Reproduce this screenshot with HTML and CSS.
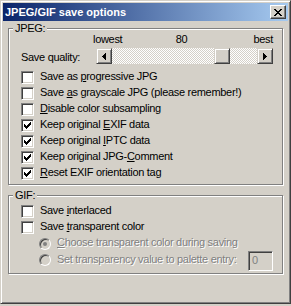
FILE: index.html
```html
<!DOCTYPE html>
<html lang="en">
<head>
    <meta charset="UTF-8">
    <title>JPEG/GIF save options</title>
    <link rel="stylesheet" href="styles.css">
</head>
<body>

    <div class="window">
        <div class="titlebar">
            <span class="title">JPEG/GIF save options</span>
            <span class="close-btn">
                <svg width="8" height="7" viewBox="0 0 8 7" shape-rendering="crispEdges"><path d="M0 0h2v1H0z M6 0h2v1H6z M1 1h2v1H1z M5 1h2v1H5z M2 2h4v1H2z M3 3h2v1H3z M2 4h4v1H2z M1 5h2v1H1z M5 5h2v1H5z M0 6h2v1H0z M6 6h2v1H6z" fill="#000"/></svg>
            </span>
        </div>

        <div class="content">
            <div class="group group-jpeg">
                <span class="group-label">JPEG:</span>

                <div class="scale-labels">
                    <span>lowest</span>
                    <span>80</span>
                    <span class="best">best</span>
                </div>

                <div class="quality-row">
                    <span class="quality-label">Save quality:</span>
                    <div class="scrollbar">
                        <span class="arrow-btn">
                            <svg width="4" height="7" viewBox="0 0 4 7" shape-rendering="crispEdges"><path d="M0 3h1v1H0z M1 2h1v3H1z M2 1h1v5H2z M3 0h1v7H3z" fill="#000"/></svg>
                        </span>
                        <div class="track">
                            <span class="thumb"></span>
                        </div>
                        <span class="arrow-btn">
                            <svg width="4" height="7" viewBox="0 0 4 7" shape-rendering="crispEdges"><path d="M0 0h1v7H0z M1 1h1v5H1z M2 2h1v3H2z M3 3h1v1H3z" fill="#000"/></svg>
                        </span>
                    </div>
                </div>

                <div class="check-row">
                    <span class="checkbox"></span>
                    <span>Save as <u>p</u>rogressive JPG</span>
                </div>
                <div class="check-row">
                    <span class="checkbox"></span>
                    <span>Save <u>a</u>s grayscale JPG (please remember!)</span>
                </div>
                <div class="check-row">
                    <span class="checkbox"></span>
                    <span><u>D</u>isable color subsampling</span>
                </div>
                <div class="check-row">
                    <span class="checkbox"><svg width="7" height="7" viewBox="0 0 7 7" shape-rendering="crispEdges"><path d="M0 2h1v3H0z M1 3h1v3H1z M2 4h1v3H2z M3 3h1v3H3z M4 2h1v3H4z M5 1h1v3H5z M6 0h1v3H6z" fill="#000"/></svg></span>
                    <span>Keep original <u>E</u>XIF data</span>
                </div>
                <div class="check-row">
                    <span class="checkbox"><svg width="7" height="7" viewBox="0 0 7 7" shape-rendering="crispEdges"><path d="M0 2h1v3H0z M1 3h1v3H1z M2 4h1v3H2z M3 3h1v3H3z M4 2h1v3H4z M5 1h1v3H5z M6 0h1v3H6z" fill="#000"/></svg></span>
                    <span>Keep original <u>I</u>PTC data</span>
                </div>
                <div class="check-row">
                    <span class="checkbox"><svg width="7" height="7" viewBox="0 0 7 7" shape-rendering="crispEdges"><path d="M0 2h1v3H0z M1 3h1v3H1z M2 4h1v3H2z M3 3h1v3H3z M4 2h1v3H4z M5 1h1v3H5z M6 0h1v3H6z" fill="#000"/></svg></span>
                    <span>Keep original JPG-<u>C</u>omment</span>
                </div>
                <div class="check-row">
                    <span class="checkbox"><svg width="7" height="7" viewBox="0 0 7 7" shape-rendering="crispEdges"><path d="M0 2h1v3H0z M1 3h1v3H1z M2 4h1v3H2z M3 3h1v3H3z M4 2h1v3H4z M5 1h1v3H5z M6 0h1v3H6z" fill="#000"/></svg></span>
                    <span><u>R</u>eset EXIF orientation tag</span>
                </div>
            </div>

            <div class="group group-gif">
                <span class="group-label">GIF:</span>

                <div class="check-row">
                    <span class="checkbox"></span>
                    <span>Save <u>i</u>nterlaced</span>
                </div>
                <div class="check-row">
                    <span class="checkbox"></span>
                    <span>Save <u>t</u>ransparent color</span>
                </div>
                <div class="radio-row">
                    <span class="radio checked"></span>
                    <span class="disabled"><u>C</u>hoose transparent color during saving</span>
                </div>
                <div class="radio-row last">
                    <span class="radio"></span>
                    <span class="disabled">Set transparency value to palette entry:</span>
                    <span class="edit">0</span>
                </div>
            </div>
        </div>
    </div>

</body>
</html>
```

FILE: styles.css
```css
/* Klasyczne okno dialogowe */
body {
    margin: 0;
    background-color: #d4d0c8;
    font-family: "Liberation Sans", Arial, sans-serif;
    font-size: 11px;
    line-height: 13px;
    letter-spacing: -0.3px;
    color: #000;
    white-space: nowrap;
}

.window {
    width: 291px;
    height: 304px;
    box-sizing: border-box;
    border: 1px solid;
    border-color: #d4d0c8 #404040 #404040 #d4d0c8;
    box-shadow: inset 1px 1px #fff, inset -1px -1px #808080;
    padding: 2px;
    background-color: #d4d0c8;
}

.titlebar {
    height: 18px;
    display: flex;
    align-items: center;
    justify-content: space-between;
    padding: 0 2px;
    background: linear-gradient(to right, #0a246a, #a6caf0);
}

.title {
    color: #fff;
    font-weight: bold;
    letter-spacing: 0;
}

.close-btn {
    width: 16px;
    height: 14px;
    box-sizing: border-box;
    display: flex;
    align-items: center;
    justify-content: center;
    background-color: #d4d0c8;
    border: 1px solid;
    border-color: #fff #404040 #404040 #fff;
    box-shadow: inset -1px -1px #808080;
}

.content {
    padding: 7px 5px 0;
}

.group {
    position: relative;
    border: 1px solid #808080;
    box-shadow: 1px 1px 0 #fff, inset 1px 1px 0 #fff;
    padding: 4px 9px 4px 12px;
}

.group-gif {
    margin-top: 10px;
    padding-top: 6px;
    padding-bottom: 2px;
}

.group-label {
    position: absolute;
    top: -7px;
    left: 4px;
    padding: 0 2px;
    background-color: #d4d0c8;
}

.scale-labels {
    display: grid;
    grid-template-columns: 1fr auto 1fr;
    margin: 0 3px 0 72px;
}

.scale-labels .best {
    justify-self: end;
    margin-right: -3px;
}

.quality-row {
    display: flex;
    align-items: center;
    height: 16px;
    margin-top: 2px;
    margin-bottom: 4px;
}

.quality-label {
    width: 75px;
    flex: none;
    line-height: 16px;
    padding-top: 2px;
}

.scrollbar {
    display: flex;
    width: 177px;
    height: 16px;
}

.arrow-btn,
.thumb {
    width: 16px;
    height: 16px;
    box-sizing: border-box;
    display: flex;
    align-items: center;
    justify-content: center;
    flex: none;
    background-color: #d4d0c8;
    border: 1px solid;
    border-color: #d4d0c8 #404040 #404040 #d4d0c8;
    box-shadow: inset 1px 1px #fff, inset -1px -1px #808080;
}

.track {
    flex: 1;
    display: flex;
    background: repeating-conic-gradient(#fff 0 25%, #d4d0c8 0 50%) 0 0 / 2px 2px;
}

.thumb {
    margin-left: 102px;
}

.check-row,
.radio-row {
    display: flex;
    align-items: flex-start;
    height: 16px;
    line-height: 16px;
}

.checkbox {
    width: 13px;
    height: 13px;
    box-sizing: border-box;
    flex: none;
    margin: 3px 6px 0 0;
    padding: 2px 0 0 2px;
    background-color: #fff;
    border: 1px solid;
    border-color: #808080 #fff #fff #808080;
    box-shadow: inset 1px 1px #404040, inset -1px -1px #d4d0c8;
}

.checkbox svg {
    display: block;
}

.radio {
    width: 12px;
    height: 12px;
    box-sizing: border-box;
    flex: none;
    margin: 4px 6px 0 18px;
    border-radius: 50%;
    background-color: #d4d0c8;
    border: 1px solid;
    border-color: #808080 #fff #fff #808080;
    box-shadow: inset 1px 1px #404040, inset -1px -1px #d4d0c8;
    display: flex;
    align-items: center;
    justify-content: center;
}

.radio.checked::after {
    content: "";
    width: 4px;
    height: 4px;
    border-radius: 50%;
    background-color: #808080;
}

.radio-row.last {
    height: 21px;
}

.radio-row.last .disabled {
    padding-top: 1px;
}

.disabled {
    color: #808080;
    text-shadow: 1px 1px 0 #fff;
}

.edit {
    width: 25px;
    height: 20px;
    box-sizing: border-box;
    margin: 1px 0 0 auto;
    padding-left: 3px;
    line-height: 16px;
    color: #808080;
    background-color: #d4d0c8;
    border: 1px solid;
    border-color: #808080 #fff #fff #808080;
    box-shadow: inset 1px 1px #404040, inset -1px -1px #d4d0c8;
}
```
